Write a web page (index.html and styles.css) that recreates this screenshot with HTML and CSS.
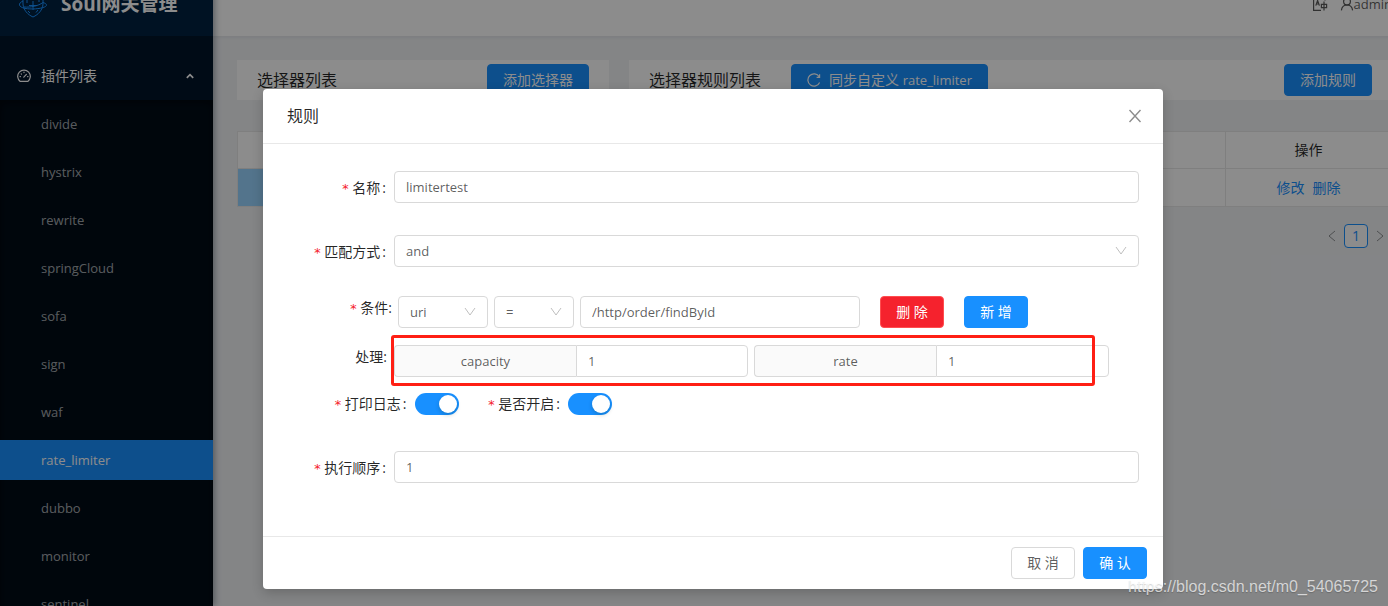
FILE: index.html
```html
<!DOCTYPE html>
<html lang="zh-CN">
<head>
<meta charset="utf-8">
<title>Soul网关管理</title>
<link rel="stylesheet" href="styles.css">
</head>
<body>
<div class="app">
  <aside class="sider">
    <div class="brand">
      <svg class="brand-logo" width="30" height="28" viewBox="0 0 30 28" fill="none" stroke="#1890ff">
        <path d="M5 5 L15 0.5 L25 5 V14 C24.6 20 20.5 24.5 15 27 C9.500 24.5 5.400 20 5 14 Z"/>
        <path d="M5 11 C-0.500 13.500 0.500 17 7 18.400 C13 19.500 22 19 26.500 17 C30 15.500 28.500 13.500 25 12.500"/>
        <path d="M6 17 C13 17.500 20 16 25 12.500"/>
        <path d="M15 11 V20 M11 15.500 H19 M9 8 V13 M21 8 V12 M10 21 L12 23 M20 20 L18 22.500"/>
      </svg>
      <h1 class="brand-name">Soul网关管理</h1>
    </div>
    <nav class="menu">
      <button class="menu-title" type="button">
        <svg width="14" height="14" viewBox="0 0 14 14" fill="none" stroke="currentColor" stroke-width="1.2" stroke-linecap="round">
          <path d="M3.2 12.4 A6.3 6.3 0 1 1 10.8 12.4 Z" stroke-linejoin="round"/>
          <path d="M6.8 8.2 L9.4 5.4 M7 3 V3.6 M3 7.6 H3.5 M10.6 7.6 H11 M4.2 4.8 L4.5 5.1"/>
        </svg>
        <span class="menu-label">插件列表</span>
        <svg width="10" height="8" viewBox="0 0 10 8" fill="none" stroke="currentColor" stroke-width="1.7"><path d="M1.8 5.8 L5 2.6 L8.2 5.8"/></svg>
      </button>
      <ul class="submenu">
        <li><a href="#">divide</a></li>
        <li><a href="#">hystrix</a></li>
        <li><a href="#">rewrite</a></li>
        <li><a href="#">springCloud</a></li>
        <li><a href="#">sofa</a></li>
        <li><a href="#">sign</a></li>
        <li><a href="#">waf</a></li>
        <li><a href="#" class="selected">rate_limiter</a></li>
        <li><a href="#">dubbo</a></li>
        <li><a href="#">monitor</a></li>
        <li><a href="#">sentinel</a></li>
      </ul>
    </nav>
  </aside>

  <div class="main">
    <header class="topbar">
      <svg width="16" height="16" viewBox="0 0 16 16" fill="none" stroke="currentColor" stroke-width="1.2">
        <path d="M6 1.5 H1.6 V14.4 H9 M3.8 9.6 L5.6 4.5 L7.4 9.6 M4.4 8 H6.8 M9.4 8.4 H14.6 V11.6 H9.4 Z M12 5.6 V14.6 M9.5 2.5 H13 V4.5"/>
      </svg>
      <span class="user">
        <svg width="14" height="14" viewBox="0 0 14 14" fill="none" stroke="currentColor" stroke-width="1.2">
          <circle cx="7" cy="4.6" r="3.4"/><path d="M1.4 13.4 C1.8 10 4 8 7 8 C10 8 12.2 10 12.6 13.4"/>
        </svg>
        <span>admin</span>
      </span>
    </header>
    <main class="content">
      <section class="selectors">
        <div class="card-head">
          <h3>选择器列表</h3>
          <button class="btn primary" type="button">添加选择器</button>
        </div>
        <table class="grid">
          <tr><th></th><th></th></tr>
          <tr class="current"><td></td><td></td></tr>
        </table>
      </section>
      <section class="rules">
        <div class="card-head">
          <div class="head-left">
            <h3>选择器规则列表</h3>
            <button class="btn primary" type="button">
              <svg width="14" height="14" viewBox="0 0 14 14" fill="none" stroke="currentColor" stroke-width="1.2"><path d="M12.6 9.4 A6.1 6.1 0 1 1 12.2 3.8 M12.6 1.2 V4.4 H9.6"/></svg>
              <span>同步自定义 <span class="latin">rate_limiter</span></span>
            </button>
          </div>
          <button class="btn primary" type="button">添加规则</button>
        </div>
        <table class="grid">
          <tr><th></th><th class="ops">操作</th></tr>
          <tr><td></td><td class="ops"><a href="#">修改</a><a href="#">删除</a></td></tr>
        </table>
        <div class="pager">
          <button type="button" aria-label="上一页"><svg width="8" height="12" viewBox="0 0 8 12" fill="none" stroke="currentColor"><path d="M7 1 L1 6 L7 11"/></svg></button>
          <button type="button" class="page-current">1</button>
          <button type="button" aria-label="下一页"><svg width="8" height="12" viewBox="0 0 8 12" fill="none" stroke="currentColor"><path d="M1 1 L7 6 L1 11"/></svg></button>
        </div>
      </section>
    </main>
  </div>

  <div class="mask">
    <div class="modal" role="dialog" aria-labelledby="modal-title">
      <div class="modal-head">
        <h2 id="modal-title">规则</h2>
        <button class="close" type="button" aria-label="关闭">
          <svg width="14" height="14" viewBox="0 0 14 14" fill="none" stroke="currentColor" stroke-width="1.4"><path d="M1.5 1 L12.5 13 M12.5 1 L1.5 13"/></svg>
        </button>
      </div>
      <form class="form">
        <div class="row row-name">
          <label for="name"><span class="star">*</span>名称<span class="colon">:</span></label>
          <input id="name" class="field" type="text" value="limitertest">
        </div>
        <div class="row row-match">
          <label for="match"><span class="star">*</span>匹配方式<span class="colon">:</span></label>
          <div class="select">
            <select id="match" class="field"><option>and</option></select>
            <svg width="12" height="10" viewBox="0 0 12 10" fill="none" stroke="currentColor"><path d="M1 1 L6 8 L11 1"/></svg>
          </div>
        </div>
        <div class="row row-cond">
          <label for="cond-value"><span class="star">*</span>条件:</label>
          <div class="cond">
            <div class="select param">
              <select class="field" aria-label="参数"><option>uri</option></select>
              <svg width="12" height="10" viewBox="0 0 12 10" fill="none" stroke="currentColor"><path d="M1 1 L6 8 L11 1"/></svg>
            </div>
            <div class="select operator">
              <select class="field" aria-label="运算符"><option>=</option></select>
              <svg width="12" height="10" viewBox="0 0 12 10" fill="none" stroke="currentColor"><path d="M1 1 L6 8 L11 1"/></svg>
            </div>
            <input id="cond-value" class="field value" type="text" value="/http/order/findById">
            <div class="cond-actions">
              <button class="btn danger" type="button">删 除</button>
              <button class="btn primary" type="button">新 增</button>
            </div>
          </div>
        </div>
        <div class="row row-handle">
          <span class="row-label">处理:</span>
          <div class="handles">
            <div class="group"><label for="capacity">capacity</label><input id="capacity" class="field" type="text" value="1"></div>
            <div class="group"><label for="rate">rate</label><input id="rate" class="field" type="text" value="1"></div>
            <div class="highlight"></div>
          </div>
        </div>
        <div class="switches">
          <div class="switch-item">
            <label for="log"><span class="star">*</span>打印日志<span class="colon">:</span></label>
            <input id="log" class="switch" type="checkbox" checked>
          </div>
          <div class="switch-item">
            <label for="enabled"><span class="star">*</span>是否开启<span class="colon">:</span></label>
            <input id="enabled" class="switch" type="checkbox" checked>
          </div>
        </div>
        <div class="row row-order">
          <label for="order"><span class="star">*</span>执行顺序<span class="colon">:</span></label>
          <input id="order" class="field" type="text" value="1">
        </div>
      </form>
      <div class="modal-foot">
        <button class="btn" type="button">取 消</button>
        <button class="btn primary" type="button">确 认</button>
      </div>
    </div>
  </div>
</div>
<div class="watermark">https://blog.csdn.net/m0_54065725</div>
</body>
</html>
```
FILE: styles.css
```css
* { box-sizing: border-box; }

body {
  margin: 0;
  height: 100vh;
  overflow: hidden;
  position: relative;
  font: 14px/20px "Open Sans", "Noto Sans CJK SC", sans-serif;
  color: rgba(0, 0, 0, 0.65);
}

h1, h2, h3, ul { margin: 0; padding: 0; font-weight: 400; }
ul { list-style: none; }
a { text-decoration: none; color: #1890ff; }
svg { flex: none; display: block; }
button, input, select { font: inherit; color: inherit; }

/* The view is scrolled slightly, so the app extends past the window. */
.app {
  position: relative;
  display: flex;
  width: calc(100% + 38px);
  min-height: calc(100% + 28px);
  margin-top: -28px;
  background: #f0f2f5;
}

/* Sider */
.sider {
  flex: none;
  width: 213px;
  height: calc(100vh + 28px);
  overflow: hidden;
  background: #001529;
  box-shadow: 2px 0 6px rgba(0, 21, 41, 0.35);
  position: relative;
}
.brand {
  height: 64px;
  display: flex;
  align-items: center;
  gap: 13px;
  padding-left: 18px;
  background: #002140;
}
.brand-name { font-size: 19px; font-weight: 700; line-height: 32px; color: #fff; white-space: nowrap; }
.menu { padding-top: 16px; }
.menu-title {
  width: 100%;
  height: 48px;
  display: flex;
  align-items: center;
  gap: 10px;
  padding: 0 18px 0 17px;
  border: 0;
  background: none;
  color: #fff;
  text-align: left;
}
.menu-label { flex: 1; }
.submenu {
  display: grid;
  gap: 8px;
  padding-top: 4px;
  background: #000c17;
  box-shadow: inset 0 2px 8px rgba(0, 0, 0, 0.45);
}
.submenu a {
  display: block;
  font-size: 13px;
  line-height: 40px;
  padding-left: 41px;
  color: rgba(255, 255, 255, 0.65);
}
.submenu .selected { background: #1890ff; color: #fff; }

/* Main area */
.main { flex: 1; min-width: 0; }
.topbar {
  height: 64px;
  display: flex;
  align-items: center;
  justify-content: flex-end;
  gap: 12px;
  padding-right: 34px;
  background: #fff;
  box-shadow: 0 1px 4px rgba(0, 21, 41, 0.08);
}
.user { display: flex; align-items: center; font-size: 13px; }
.latin { font-size: 13px; }
.content { display: grid; grid-template-columns: 372fr 763fr; gap: 20px; padding: 24px 34px 24px 24px; }
.card-head {
  height: 40px;
  display: flex;
  align-items: center;
  justify-content: space-between;
  padding: 0 20px;
  background: #fff;
}
.card-head h3 { font-size: 16px; color: rgba(0, 0, 0, 0.85); }
.head-left { display: flex; align-items: center; gap: 30px; }

.btn {
  height: 32px;
  min-width: 64px;
  display: inline-flex;
  align-items: center;
  justify-content: center;
  gap: 8px;
  padding: 0 15px;
  border: 1px solid #d9d9d9;
  border-radius: 4px;
  background: #fff;
  white-space: nowrap;
}
.btn.primary { background: #1890ff; border-color: #1890ff; color: #fff; }
.btn.danger { background: #f5222d; border-color: #ff4d4f; color: #fff; }

.grid {
  width: 100%;
  margin-top: 31px;
  border-collapse: collapse;
  background: #fff;
  table-layout: fixed;
}
.grid th, .grid td {
  height: 38px;
  padding: 0;
  border: 1px solid #e8e8e8;
  font-weight: 400;
  text-align: center;
}
.grid th { height: 37px; color: rgba(0, 0, 0, 0.85); }
.grid .current td { background: #97d3ff; }
.grid .ops { width: 166px; }
.grid .ops a + a { margin-left: 8px; }
.pager { display: flex; justify-content: flex-end; margin-top: 17px; }
.pager button {
  width: 24px;
  height: 24px;
  display: flex;
  align-items: center;
  justify-content: center;
  padding: 0;
  border: 0;
  background: none;
  color: rgba(0, 0, 0, 0.4);
}
.pager .page-current { border: 1px solid #1890ff; border-radius: 4px; background: #fff; color: #1890ff; }

/* Modal */
.mask {
  position: absolute;
  inset: 0;
  display: flex;
  justify-content: center;
  align-items: flex-start;
  padding-top: 117px;
  background: rgba(0, 0, 0, 0.45);
}
.modal { width: 900px; background: #fff; border-radius: 4px; box-shadow: 0 4px 12px rgba(0, 0, 0, 0.2); }
.modal-head {
  display: flex;
  align-items: center;
  justify-content: space-between;
  height: 55px;
  padding: 0 21px 0 24px;
  border-bottom: 1px solid #e8e8e8;
}
.modal-head h2 { font-size: 16px; color: rgba(0, 0, 0, 0.85); }
.close { padding: 0; border: 0; background: none; color: rgba(0, 0, 0, 0.45); }
.form { padding: 27px 24px 53px; color: rgba(0, 0, 0, 0.85); }
.row { display: grid; grid-template-columns: 99px 1fr; gap: 8px; align-items: center; margin-bottom: 32px; }
.row > label, .row-label { display: flex; justify-content: flex-end; padding-top: 2px; white-space: nowrap; }
.star {
  height: 20px;
  margin-right: 3px;
  padding-top: 1px;
  font: 13px/20px "DejaVu Sans Mono", monospace;
  color: #f5222d;
}
.colon { margin-left: 2px; }

.field {
  width: 100%;
  height: 32px;
  min-width: 0;
  padding: 0 11px;
  border: 1px solid #d9d9d9;
  border-radius: 4px;
  background: #fff;
  font-size: 13px;
  color: rgba(0, 0, 0, 0.65);
  appearance: none;
}
.select { position: relative; }
.select svg { position: absolute; right: 12px; top: 11px; color: #bfbfbf; pointer-events: none; }

.row-match { margin-bottom: 29px; }
.row-cond { grid-template-columns: 105px 1fr; gap: 6px; margin-bottom: 17px; align-items: start; }
.cond { display: flex; gap: 6px; }
.param { width: 90px; }
.operator { width: 80px; }
.value { width: 280px; }
.cond-actions { display: flex; gap: 20px; margin-left: 14px; }

.row-handle { grid-template-columns: 100px 715px; gap: 7px; margin-bottom: 16px; align-items: start; }
.handles { position: relative; display: grid; grid-template-columns: 354fr 355fr; gap: 6px; }
.group { display: flex; }
.group label {
  flex: 0 0 182px;
  font-size: 13px;
  line-height: 30px;
  text-align: center;
  border: 1px solid #d9d9d9;
  border-right: 0;
  border-radius: 4px 0 0 4px;
  background: #fafafa;
  color: rgba(0, 0, 0, 0.65);
}
.group .field { flex: 1; border-radius: 0 4px 4px 0; }
.highlight {
  position: absolute;
  inset: -10px 14px -9px -3px;
  border: 3px solid #ff1f14;
  border-radius: 3px;
  pointer-events: none;
}

.switches { display: flex; gap: 29px; margin-bottom: 36px; padding-left: 47px; }
.switch-item { display: flex; align-items: center; gap: 8px; }
.switch-item label { display: flex; }
.switch {
  appearance: none;
  width: 44px;
  height: 22px;
  margin: 0;
  padding: 2px;
  border-radius: 11px;
  background: #1890ff;
  display: flex;
  justify-content: flex-end;
}
.switch::before {
  content: "";
  width: 18px;
  height: 18px;
  border-radius: 50%;
  background: #fff;
  box-shadow: 0 2px 4px rgba(0, 35, 11, 0.2);
}
.row-order { margin-bottom: 0; }

.modal-foot {
  display: flex;
  justify-content: flex-end;
  gap: 8px;
  padding: 10px 16px;
  border-top: 1px solid #e8e8e8;
}

.watermark {
  position: absolute;
  right: 10px;
  bottom: 9px;
  font: 16px/20px "Liberation Sans", Arial, sans-serif;
  color: rgba(255, 255, 255, 0.7);
  text-shadow: 0 1px 1px rgba(0, 0, 0, 0.2);
}
```
